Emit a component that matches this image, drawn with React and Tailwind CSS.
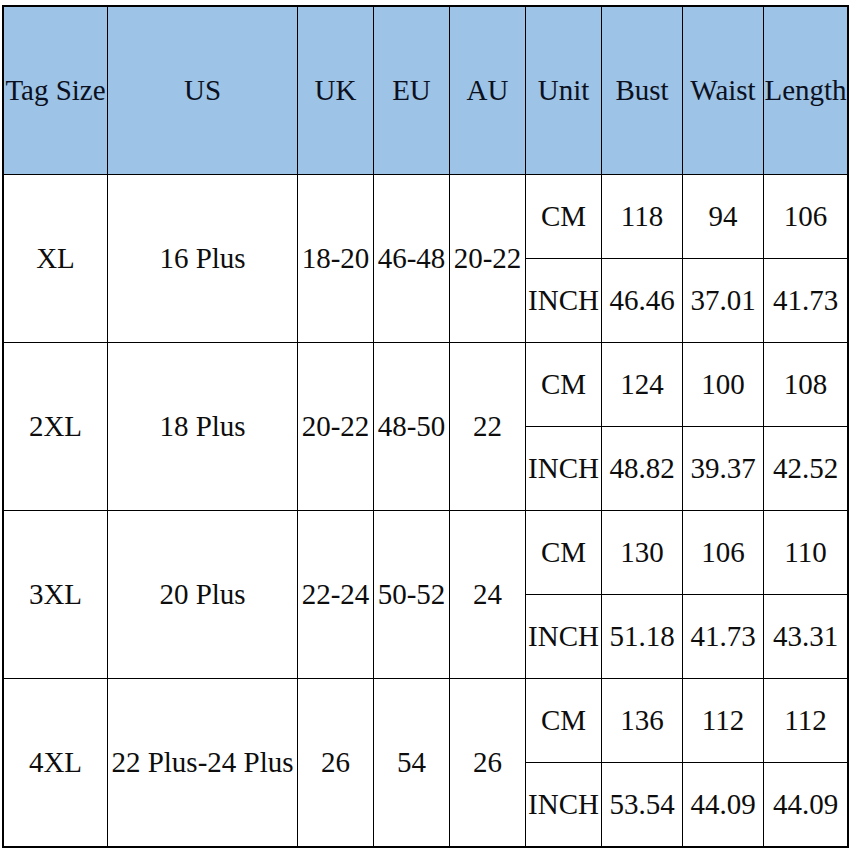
import React from "react";

const headers = ["Tag Size", "US", "UK", "EU", "AU", "Unit", "Bust", "Waist", "Length"];

const groups = [
  { tag: "XL", us: "16 Plus", uk: "18-20", eu: "46-48", au: "20-22", cm: ["118", "94", "106"], inch: ["46.46", "37.01", "41.73"] },
  { tag: "2XL", us: "18 Plus", uk: "20-22", eu: "48-50", au: "22", cm: ["124", "100", "108"], inch: ["48.82", "39.37", "42.52"] },
  { tag: "3XL", us: "20 Plus", uk: "22-24", eu: "50-52", au: "24", cm: ["130", "106", "110"], inch: ["51.18", "41.73", "43.31"] },
  { tag: "4XL", us: "22 Plus-24 Plus", uk: "26", eu: "54", au: "26", cm: ["136", "112", "112"], inch: ["53.54", "44.09", "44.09"] },
];

function Cell({ children, className = "" }) {
  return (
    <div className={"flex items-center justify-center bg-white whitespace-nowrap overflow-hidden " + className}>
      {children}
    </div>
  );
}

export default function App() {
  return (
    <div className="w-[852px] h-[852px] bg-white pt-[5px] pl-[2px] text-[29px] text-[#0d0d0d] leading-none font-['Liberation_Serif','Times_New_Roman',serif]">
      <div className="grid w-[847px] border-2 border-black bg-black gap-px grid-cols-[103px_189px_75px_75px_75px_75px_80px_80px_83px] grid-rows-[167px_repeat(8,83px)]">
        {headers.map((h) => (
          <div key={h} className="flex items-center justify-center bg-[#9dc3e6] text-[#0b1020] whitespace-nowrap overflow-hidden">
            {h}
          </div>
        ))}
        {groups.map((g) => (
          <React.Fragment key={g.tag}>
            <Cell className="row-span-2">{g.tag}</Cell>
            <Cell className="row-span-2">{g.us}</Cell>
            <Cell className="row-span-2">{g.uk}</Cell>
            <Cell className="row-span-2">{g.eu}</Cell>
            <Cell className="row-span-2">{g.au}</Cell>
            <Cell>CM</Cell>
            {g.cm.map((v, i) => (
              <Cell key={"c" + i}>{v}</Cell>
            ))}
            <Cell>INCH</Cell>
            {g.inch.map((v, i) => (
              <Cell key={"i" + i}>{v}</Cell>
            ))}
          </React.Fragment>
        ))}
      </div>
    </div>
  );
}
